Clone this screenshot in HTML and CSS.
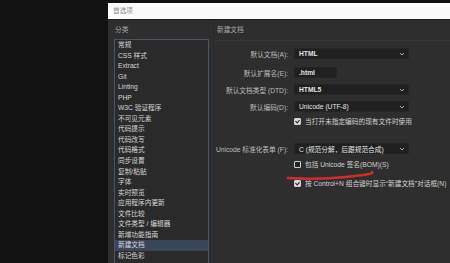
FILE: index.html
```html
<!DOCTYPE html>
<html>
<head>
	<meta charset="utf-8">
	<title>首选项</title>
	<link rel="stylesheet" href="styles.css">
</head>
<body>
<div class="desk">
	<div class="dialog">
		<div class="titlebar">首选项</div>
		<div class="main">
			<div class="side">
				<h3>分类</h3>
				<ul class="list">
					<li>常规</li>
					<li>CSS 样式</li>
					<li>Extract</li>
					<li>Git</li>
					<li>Linting</li>
					<li>PHP</li>
					<li>W3C 验证程序</li>
					<li>不可见元素</li>
					<li>代码提示</li>
					<li>代码改写</li>
					<li>代码格式</li>
					<li>同步设置</li>
					<li>复制/粘贴</li>
					<li>字体</li>
					<li>实时预览</li>
					<li>应用程序内更新</li>
					<li>文件比较</li>
					<li>文件类型 / 编辑器</li>
					<li>新增功能指南</li>
					<li class="on">新建文档</li>
					<li>标记色彩</li>
				</ul>
			</div>
			<div class="panel">
				<h3>新建文档</h3>
				<div class="form">
					<div class="row r1">
						<label>默认文档(A):</label>
						<div class="select"><b>HTML</b><svg width="6" height="4" viewBox="0 0 6 4"><polyline points="1,1 3,3 5,1" fill="none" stroke="#aaa" stroke-width="1"/></svg></div>
					</div>
					<div class="row r2">
						<label>默认扩展名(E):</label>
						<div class="input">.html</div>
					</div>
					<div class="row r3">
						<label>默认文档类型 (DTD):</label>
						<div class="select"><b>HTML5</b><svg width="6" height="4" viewBox="0 0 6 4"><polyline points="1,1 3,3 5,1" fill="none" stroke="#aaa" stroke-width="1"/></svg></div>
					</div>
					<div class="row r4">
						<label>默认编码(D):</label>
						<div class="select"><span>Unicode (UTF-8)</span><svg width="6" height="4" viewBox="0 0 6 4"><polyline points="1,1 3,3 5,1" fill="none" stroke="#aaa" stroke-width="1"/></svg></div>
					</div>
					<div class="row r5">
						<span></span>
						<div class="check"><i class="box checked"></i>当打开未指定编码的现有文件时使用</div>
					</div>
					<div class="row r6">
						<label>Unicode 标准化表单 (F):</label>
						<div class="select"><span>C (规范分解，后跟规范合成)</span><svg width="6" height="4" viewBox="0 0 6 4"><polyline points="1,1 3,3 5,1" fill="none" stroke="#aaa" stroke-width="1"/></svg></div>
					</div>
					<div class="row r7">
						<span></span>
						<div class="check"><i class="box"></i>包括 Unicode 签名(BOM)(S)</div>
					</div>
					<div class="row r8">
						<span></span>
						<div class="check"><i class="box checked"></i>按 Control+N 组合键时显示“新建文档”对话框(N)</div>
					</div>
					<svg class="mark" width="120" height="20" viewBox="0 0 120 20">
						<path d="M2 15 Q 30 17 60 14 T 86 9" fill="none" stroke="#d42b2b" stroke-width="2.5" stroke-linecap="round"/>
					</svg>
				</div>
			</div>
		</div>
	</div>
</div>
</body>
</html>
```

FILE: styles.css
```css
*{
	margin: 0;
	padding: 0;
	list-style: none;
	box-sizing: border-box;
}
body{
	background: #121212;
	font-family: "Liberation Sans", "Noto Sans CJK SC", sans-serif;
	font-size: 6.7px;
	color: #c9c9c9;
	height: 263px;
	overflow: hidden;
}
.desk{
	padding: 3px 0 0 108px;
}
.dialog{
	width: 342px;
	height: 260px;
	background: #2e2e2e;
}
.titlebar{
	height: 17px;
	line-height: 16px;
	padding-left: 5px;
	background: #fbfbfb;
	border-bottom: 1px solid #1c1c1c;
	color: #8c8c8c;
}
.main{
	display: flex;
}
h3{
	font-weight: normal;
	font-size: 6.7px;
	color: #a8a8a8;
	line-height: 19px;
}
.side{
	width: 105px;
	padding-left: 6px;
}
.side h3{
	padding-left: 1px;
}
.list{
	width: 95px;
	height: 230px;
	border: 1px solid #48566a;
	background: #2a2a2a;
}
.list li{
	line-height: 10.55px;
	padding-left: 3px;
	color: #d6d6d6;
	white-space: nowrap;
}
.list li.on{
	background: #3a4657;
}
.panel{
	flex: 1;
	border-left: 1px solid #2a2a2a;
}
.panel h3{
	padding-left: 3px;
	line-height: 20px;
}
.form{
	position: relative;
	border-top: 1px solid #383838;
	height: 200px;
}
.row{
	display: grid;
	grid-template-columns: 74px 1fr;
	column-gap: 6px;
	align-items: center;
}
.row label{
	text-align: right;
	white-space: nowrap;
	color: #bdbdbd;
}
.r1{ margin-top: 7px; }
.r2{ margin-top: 8px; }
.r3{ margin-top: 6px; }
.r4{ margin-top: 6px; }
.r5{ margin-top: 5px; }
.r6{ margin-top: 18px; }
.r7{ margin-top: 6px; }
.r8{ margin-top: 11px; }
.select{
	width: 115px;
	height: 11px;
	background: #202020;
	border: 1px solid #252525;
	display: flex;
	align-items: center;
	justify-content: space-between;
	padding: 0 3px 0 4px;
	color: #e4e4e4;
	white-space: nowrap;
}
.select b{
	font-weight: bold;
}
.input{
	width: 43px;
	height: 11px;
	line-height: 9px;
	background: #202020;
	border: 1px solid #252525;
	padding-left: 4px;
	color: #e4e4e4;
	font-weight: bold;
}
.check{
	height: 8px;
	display: flex;
	align-items: center;
	white-space: nowrap;
	color: #d0d0d0;
}
.box{
	width: 7px;
	height: 7px;
	margin-right: 4px;
	border: 1px solid #cfcfcf;
	background: #262626;
	border-radius: 1px;
	position: relative;
	flex: none;
}
.box.checked{
	background: #d8d8d8;
}
.box.checked:after{
	content: "";
	position: absolute;
	left: 1px;
	top: 0;
	width: 2px;
	height: 3px;
	border-right: 1px solid #222;
	border-bottom: 1px solid #222;
	transform: rotate(40deg);
}
.mark{
	position: absolute;
	left: 72px;
	top: 122px;
}
```
